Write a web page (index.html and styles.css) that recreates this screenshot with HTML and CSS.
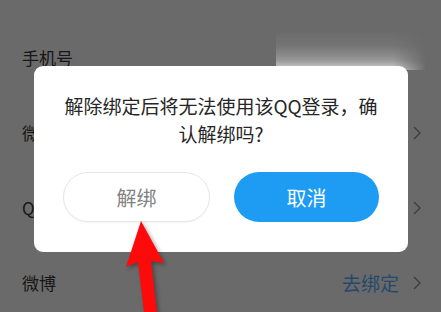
FILE: index.html
```html
<!DOCTYPE html>
<html lang="zh-CN">
<head>
<meta charset="utf-8">
<link rel="stylesheet" href="styles.css">
</head>
<body>
<div class="screen">
  <div class="list">
    <div class="row"><span class="label">手机号</span></div>
    <div class="row"><span class="label">微信</span><svg class="chev" viewBox="0 0 8 14"><polyline points="1,1 7,7 1,13"/></svg></div>
    <div class="row"><span class="label">QQ</span><svg class="chev" viewBox="0 0 8 14"><polyline points="1,1 7,7 1,13"/></svg></div>
    <div class="row"><span class="label">微博</span><span class="action">去绑定</span><svg class="chev" viewBox="0 0 8 14"><polyline points="1,1 7,7 1,13"/></svg></div>
  </div>
  <div class="glare"></div>
  <div class="dialog">
    <p class="msg">解除绑定后将无法使用该QQ登录，确认解绑吗?</p>
    <div class="buttons">
      <button class="btn btn-ghost">解绑</button>
      <button class="btn btn-primary">取消</button>
    </div>
  </div>
  <svg class="arrow" viewBox="0 0 441 312" width="441" height="312">
    <polygon points="141,221 164,263 151,261 157,312 144,312 138,262 126,267"/>
  </svg>
</div>
</body>
</html>
```

FILE: styles.css
```css
* { box-sizing: border-box; }
html, body { margin: 0; padding: 0; }
body {
  width: 441px;
  height: 312px;
  overflow: hidden;
  font-family: "Noto Sans CJK SC", "Noto Sans", sans-serif;
}
.screen {
  position: relative;
  width: 441px;
  height: 312px;
  background: #6a6a6a;
  overflow: hidden;
}
.list {
  padding-top: 20px;
}
.row {
  height: 75px;
  display: flex;
  align-items: center;
  padding: 0 20px 0 22px;
}
.label {
  flex: 1;
  font-size: 17px;
  color: #161616;
}
.action {
  font-size: 19px;
  color: #25496a;
  margin-right: 14px;
}
.chev {
  width: 8px;
  height: 14px;
  fill: none;
  stroke: #3e3e3e;
  stroke-width: 1.4;
}
.glare {
  position: absolute;
  left: 276px;
  top: 30px;
  width: 150px;
  height: 40px;
  background: linear-gradient(to bottom, rgba(255,255,255,0) 0%, rgba(255,255,255,0.08) 40%, rgba(255,255,255,0.3) 75%, rgba(255,255,255,0.7) 100%);
  -webkit-mask-image: linear-gradient(to right, #000 0%, #000 78%, rgba(0,0,0,0) 100%);
  mask-image: linear-gradient(to right, #000 0%, #000 78%, rgba(0,0,0,0) 100%);
}
.dialog {
  position: absolute;
  left: 34px;
  top: 66px;
  width: 374px;
  height: 186px;
  background: #fff;
  border-radius: 9px;
  padding: 26px 29px 0;
}
.msg {
  margin: 0;
  font-size: 19px;
  line-height: 28px;
  color: #262626;
  text-align: center;
}
.buttons {
  display: flex;
  gap: 24px;
  margin-top: 24px;
}
.btn {
  flex: 1;
  height: 50px;
  border-radius: 25px;
  font-family: inherit;
  font-size: 20px;
  padding: 0;
}
.btn-ghost {
  background: #fff;
  border: 1px solid #e6e6e6;
  color: #828282;
  box-shadow: 0 1px 2px rgba(0,0,0,0.04);
}
.btn-primary {
  background: #1e9cf4;
  border: none;
  color: #fff;
}
.arrow {
  position: absolute;
  left: 0;
  top: 0;
}
.arrow polygon {
  fill: #ff0a0a;
  filter: drop-shadow(2px 2px 2px rgba(0,0,0,0.35));
}
```
